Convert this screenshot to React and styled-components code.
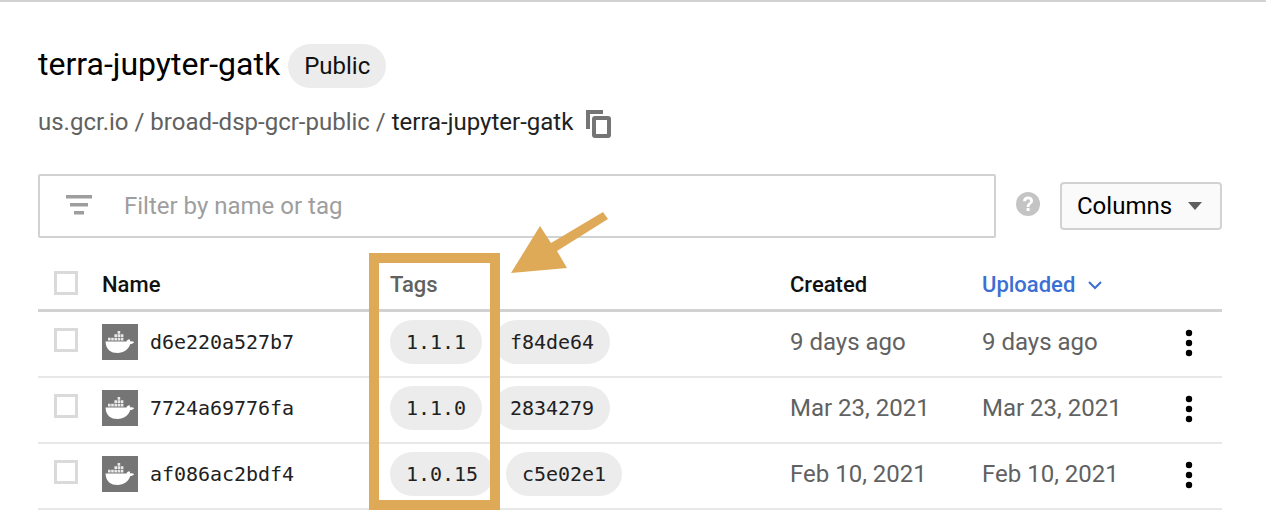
import React from "react";
import styled, { createGlobalStyle } from "styled-components";

const Global = createGlobalStyle`
  html, body { margin: 0; padding: 0; background: #fff; }
  body { font-family: Roboto, "Liberation Sans", sans-serif; overflow: hidden; }
`;
const Page = styled.div`
  position: relative;
  width: 1266px;
  height: 512px;
  box-sizing: border-box;
  border-top: 2px solid #d2d2d2;
  padding: 42px 44px 0 38px;
  overflow: hidden;
`;
const TitleRow = styled.div`
  display: flex;
  align-items: center;
  gap: 8px;
  height: 44px;
`;
const Title = styled.h1`
  margin: 0 0 4px;
  font-size: 32px;
  font-weight: 400;
  color: #000;
`;
const Badge = styled.span`
  display: inline-flex;
  align-items: center;
  height: 44px;
  padding: 0 16px;
  border-radius: 22px;
  background: #ececec;
  font-size: 24px;
  color: #111;
`;
const Crumbs = styled.div`
  display: flex;
  align-items: center;
  height: 40px;
  margin-top: 14px;
  font-size: 24px;
  color: #616161;
  white-space: pre;
`;
const CrumbCurrent = styled.span`
  color: #212121;
`;
const CopyIcon = styled.svg`
  width: 25px;
  height: 28px;
  margin: 4px 0 0 13px;
  flex: none;
`;
const Toolbar = styled.div`
  display: flex;
  align-items: center;
  margin-top: 32px;
  height: 64px;
`;
const FilterBox = styled.div`
  display: flex;
  align-items: center;
  box-sizing: border-box;
  width: 958px;
  height: 64px;
  border: 2px solid #d2d2d2;
  border-radius: 2px;
  padding-left: 26px;
  gap: 32px;
`;
const FilterIcon = styled.svg`
  width: 26px;
  height: 22px;
  flex: none;
  margin-top: -2px;
`;
const Placeholder = styled.span`
  font-size: 24px;
  color: #9e9e9e;
`;
const HelpIcon = styled.svg`
  width: 24px;
  height: 24px;
  margin: -4px 20px 0 20px;
  flex: none;
`;
const ColumnsButton = styled.div`
  display: flex;
  align-items: center;
  justify-content: space-between;
  box-sizing: border-box;
  width: 162px;
  height: 48px;
  padding: 0 18px 0 15px;
  border: 2px solid #d2d2d2;
  border-radius: 4px;
  background: #fafafa;
  font-size: 24px;
  color: #000;
`;
const Caret = styled.i`
  width: 0;
  height: 0;
  border-left: 7.5px solid transparent;
  border-right: 7.5px solid transparent;
  border-top: 8px solid #5f5f5f;
`;
const Table = styled.div``;
const Row = styled.div`
  display: grid;
  grid-template-columns: 48px 288px 400px 192px 190px 34px;
  align-items: center;
  box-sizing: border-box;
  height: ${(p) => (p.$head ? "74px" : "66px")};
  padding: ${(p) => (p.$head ? "22px 0 0 16px" : "0 0 5px 16px")};
  border-bottom: ${(p) => (p.$head ? "3px solid #d2d2d2" : "2px solid #e8e8e8")};
`;
const Check = styled.span`
  display: block;
  box-sizing: border-box;
  width: 24px;
  height: 24px;
  border: 3px solid #dadada;
  margin-top: -4px;
`;
const HeadCell = styled.span`
  display: flex;
  align-items: center;
  gap: 12px;
  font-size: 22px;
  font-weight: 500;
  color: ${(p) => p.$color || "#111"};
`;
const NameCell = styled.div`
  display: flex;
  align-items: center;
  gap: 12px;
`;
const DockerBox = styled.svg`
  width: 36px;
  height: 36px;
  flex: none;
`;
const Mono = styled.span`
  font-family: "DejaVu Sans Mono", "Liberation Mono", monospace;
  font-size: 20px;
  letter-spacing: -0.04px;
  color: #212121;
`;
const Chips = styled.div`
  display: flex;
  gap: 12px;
`;
const Chip = styled.span`
  display: inline-flex;
  align-items: center;
  justify-content: center;
  height: 44px;
  padding: 0 16px;
  border-radius: 22px;
  background: #ececec;
`;
const DateCell = styled.span`
  font-size: 24px;
  color: #616161;
`;
const Kebab = styled.svg`
  width: 8px;
  height: 28px;
  justify-self: center;
  margin-top: 2px;
`;
const Highlight = styled.div`
  position: absolute;
  left: 369px;
  top: 251px;
  width: 131px;
  height: 257px;
  box-sizing: border-box;
  border: 10px solid #dfaa58;
`;
const Arrow = styled.svg`
  position: absolute;
  left: 505px;
  top: 203px;
  width: 110px;
  height: 75px;
`;

const Docker = () => (
  <DockerBox viewBox="0 0 36 36">
    <rect width="36" height="36" fill="#757575" />
    <path
      fill="#fff"
      d="M3.5 17.5h21c.6-1.6 2.2-2.3 3.2-2.1.4.7.5 1.5.4 2.2 1.1-.5 2.6-.5 4 .3-.8 1.4-2.2 2.1-3.8 2.2C26.4 25.7 22 29 15.5 29 9 29 4 26 3.5 17.5z"
    />
    <path
      fill="#fff"
      d="M6 13.7h2.6v2.8H6zM9.2 13.7h2.6v2.8H9.2zM12.4 13.7H15v2.8h-2.6zM15.6 13.7h2.6v2.8h-2.6zM18.8 13.7h2.6v2.8h-2.6zM12.4 10.3H15v2.8h-2.6zM15.6 10.3h2.6v2.8h-2.6zM18.8 10.3h2.6v2.8h-2.6zM15.6 7h2.6v2.7h-2.6z"
      opacity=".85"
    />
  </DockerBox>
);

const More = () => (
  <Kebab viewBox="0 0 8 28">
    <circle cx="4" cy="4" r="3.2" fill="#000" />
    <circle cx="4" cy="14" r="3.2" fill="#000" />
    <circle cx="4" cy="24" r="3.2" fill="#000" />
  </Kebab>
);

const rows = [
  { id: "d6e220a527b7", tags: ["1.1.1", "f84de64"], created: "9 days ago", uploaded: "9 days ago" },
  { id: "7724a69776fa", tags: ["1.1.0", "2834279"], created: "Mar 23, 2021", uploaded: "Mar 23, 2021" },
  { id: "af086ac2bdf4", tags: ["1.0.15", "c5e02e1"], created: "Feb 10, 2021", uploaded: "Feb 10, 2021" },
];

export default function App() {
  return (
    <Page>
      <Global />
      <TitleRow>
        <Title>terra-jupyter-gatk</Title>
        <Badge>Public</Badge>
      </TitleRow>
      <Crumbs>
        us.gcr.io / broad-dsp-gcr-public / <CrumbCurrent>terra-jupyter-gatk</CrumbCurrent>
        <CopyIcon viewBox="0 0 25 28">
          <path d="M2 19V2H17" fill="none" stroke="#757575" strokeWidth="4" />
          <rect x="8" y="8" width="15" height="18" rx="1" fill="none" stroke="#757575" strokeWidth="4" />
        </CopyIcon>
      </Crumbs>
      <Toolbar>
        <FilterBox>
          <FilterIcon viewBox="0 0 26 22">
            <path d="M0 1h26v3.6H0zM4 9h18v3.6H4zM8 17h10v3.6H8z" fill="#9e9e9e" />
          </FilterIcon>
          <Placeholder>Filter by name or tag</Placeholder>
        </FilterBox>
        <HelpIcon viewBox="0 0 24 24">
          <circle cx="12" cy="12" r="12" fill="#c4c4c4" />
          <path
            d="M7 9.2C7.1 6.3 9.1 4.6 12.1 4.6c2.9 0 4.9 1.7 4.9 4.1 0 1.7-.8 2.6-2 3.5-1.1.8-1.4 1.4-1.4 2.7h-2.9c0-2 .6-2.9 1.9-3.9.9-.7 1.5-1.2 1.5-2.2 0-1-.8-1.6-2-1.6-1.2 0-2 .8-2.1 2zM10.6 16.1h3v3h-3z"
            fill="#fff"
          />
        </HelpIcon>
        <ColumnsButton>
          Columns
          <Caret />
        </ColumnsButton>
      </Toolbar>
      <Table>
        <Row $head>
          <Check />
          <HeadCell>Name</HeadCell>
          <HeadCell $color="#616161">Tags</HeadCell>
          <HeadCell>Created</HeadCell>
          <HeadCell $color="#3b6fd4">
            Uploaded
            <svg width="16" height="10" viewBox="0 0 16 10">
              <path d="M2 2l6 6 6-6" fill="none" stroke="#3b6fd4" strokeWidth="2" />
            </svg>
          </HeadCell>
          <span />
        </Row>
        {rows.map((r) => (
          <Row key={r.id}>
            <Check />
            <NameCell>
              <Docker />
              <Mono>{r.id}</Mono>
            </NameCell>
            <Chips>
              {r.tags.map((t) => (
                <Chip key={t}>
                  <Mono>{t}</Mono>
                </Chip>
              ))}
            </Chips>
            <DateCell>{r.created}</DateCell>
            <DateCell>{r.uploaded}</DateCell>
            <More />
          </Row>
        ))}
      </Table>
      <Highlight />
      <Arrow viewBox="0 0 110 75">
        <path d="M6 68L35 21L46 38L98 7L103 14L52 46L62 63Z" fill="#dfaa58" />
      </Arrow>
    </Page>
  );
}
